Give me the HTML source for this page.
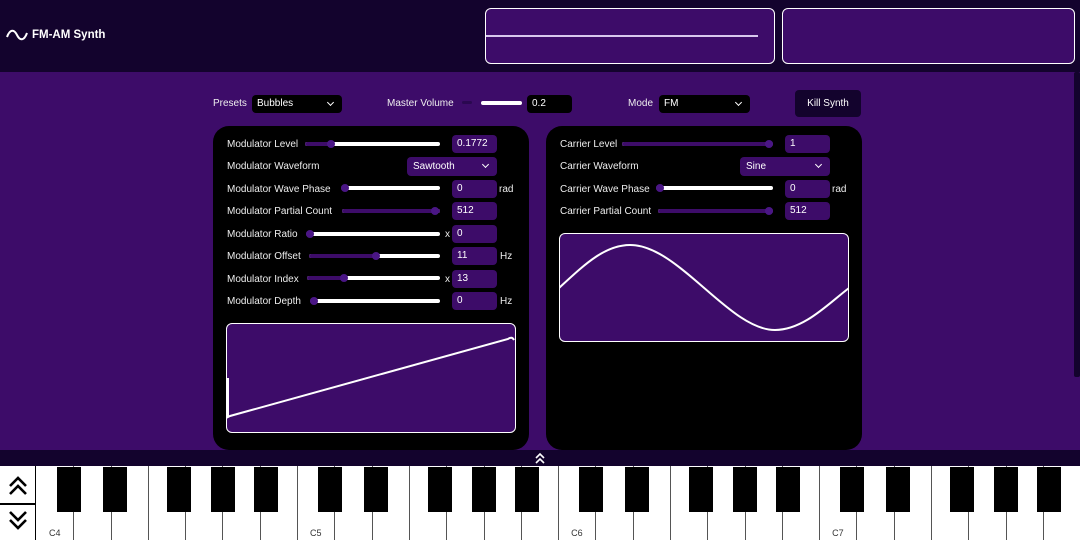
<!DOCTYPE html>
<html><head><meta charset="utf-8"><style>
*{box-sizing:border-box;margin:0;padding:0}
body{width:1080px;height:540px;overflow:hidden;background:#3d0c69;font-family:"Liberation Sans",sans-serif;color:#fff;position:relative}
.a{position:absolute}
.hdr{left:0;top:0;width:1080px;height:72px;background:#13032d}
.t{font-size:10px;color:#eee;white-space:nowrap}
.panel{background:#000;border-radius:16px}
.inp{background:#3d0c69;border-radius:4px;height:18px;font-size:10px;padding:3px 0 0 5px;color:#fff}
.sel{background:#3d0c69;border-radius:4px;height:19px;font-size:10px;padding:4px 0 0 6px}
.sel:after,.bsel:after{content:"";position:absolute;right:9px;top:5px;width:4px;height:4px;border-right:1.5px solid #fff;border-bottom:1.5px solid #fff;transform:rotate(45deg)}
.bsel,.binp{background:#000;border-radius:4px;height:18px;font-size:10px;padding:3px 0 0 5px}
.tr{height:4px;background:#fff;border-radius:2px}
.tr i{position:absolute;left:0;top:0;height:4px;background:#3d0c69;border-radius:2px}
.tr b{position:absolute;top:-2px;width:8px;height:8px;border-radius:50%;background:#4a1685}
.box{border:1.5px solid #fff;border-radius:6px;background:#3d0c69}
.bk{top:467px;width:24px;height:45px;background:#000}
</style></head><body>
<div class="a hdr"></div>
<svg class="a" style="left:6px;top:27px" width="22" height="16" viewBox="0 0 22 16"><path d="M1 10 C4 2,8 2,11 8 C14 14,18 14,21 6" fill="none" stroke="#fff" stroke-width="2"/></svg>
<div class="a" style="left:32px;top:29px;font-size:11.5px;font-weight:bold">FM-AM Synth</div>
<div class="a box" style="left:485px;top:8px;width:290px;height:56px"></div>
<div class="a" style="left:486px;top:35px;width:272px;height:1.5px;background:#d8c8ee"></div>
<div class="a box" style="left:782px;top:8px;width:293px;height:56px"></div>
<div class="a" style="left:1074px;top:72px;width:6px;height:305px;background:#13032d;border-radius:2px"></div>

<div class="a t" style="left:213px;top:98px">Presets</div>
<div class="a bsel" style="left:252px;top:95px;width:90px">Bubbles</div>
<div class="a t" style="left:387px;top:98px">Master Volume</div>
<div class="a" style="left:462px;top:101px;width:10px;height:3px;background:#2a0850;border-radius:2px"></div>
<div class="a" style="left:481px;top:101px;width:41px;height:4px;background:#fff;border-radius:2px"></div>
<div class="a binp" style="left:527px;top:95px;width:45px">0.2</div>
<div class="a t" style="left:628px;top:98px">Mode</div>
<div class="a bsel" style="left:659px;top:95px;width:91px">FM</div>
<div class="a" style="left:795px;top:90px;width:66px;height:27px;background:#13032d;border-radius:4px;font-size:10px;text-align:center;padding-top:8px">Kill Synth</div>

<div class="a panel" style="left:213px;top:126px;width:316px;height:324px"></div>
<div class="a panel" style="left:546px;top:126px;width:316px;height:324px"></div>

<div class="a t" style="left:227px;top:139px">Modulator Level</div>
<div class="a tr" style="left:305px;top:142px;width:135px"><i style="width:26px"></i><b style="left:22px"></b></div>
<div class="a inp" style="left:452px;top:135px;width:45px">0.1772</div>

<div class="a t" style="left:227px;top:161px">Modulator Waveform</div>
<div class="a sel" style="left:407px;top:157px;width:90px">Sawtooth</div>

<div class="a t" style="left:227px;top:184px">Modulator Wave Phase</div>
<div class="a tr" style="left:341px;top:186px;width:99px"><i style="width:4px"></i><b style="left:0"></b></div>
<div class="a inp" style="left:452px;top:180px;width:45px">0</div>
<div class="a t" style="left:499px;top:184px">rad</div>

<div class="a t" style="left:227px;top:206px">Modulator Partial Count</div>
<div class="a tr" style="left:342px;top:209px;width:98px"><i style="width:98px"></i><b style="left:89px"></b></div>
<div class="a inp" style="left:452px;top:202px;width:45px">512</div>

<div class="a t" style="left:227px;top:229px">Modulator Ratio</div>
<div class="a tr" style="left:306px;top:232px;width:134px"><i style="width:4px"></i><b style="left:0"></b></div>
<div class="a t" style="left:445px;top:229px">x</div>
<div class="a inp" style="left:452px;top:225px;width:45px">0</div>

<div class="a t" style="left:227px;top:251px">Modulator Offset</div>
<div class="a tr" style="left:309px;top:254px;width:131px"><i style="width:68px"></i><b style="left:63px"></b></div>
<div class="a inp" style="left:452px;top:247px;width:45px">11</div>
<div class="a t" style="left:500px;top:251px">Hz</div>

<div class="a t" style="left:227px;top:274px">Modulator Index</div>
<div class="a tr" style="left:307px;top:276px;width:133px"><i style="width:38px"></i><b style="left:33px"></b></div>
<div class="a t" style="left:445px;top:274px">x</div>
<div class="a inp" style="left:452px;top:270px;width:45px">13</div>

<div class="a t" style="left:227px;top:296px">Modulator Depth</div>
<div class="a tr" style="left:310px;top:299px;width:130px"><i style="width:4px"></i><b style="left:0"></b></div>
<div class="a inp" style="left:452px;top:292px;width:45px">0</div>
<div class="a t" style="left:500px;top:296px">Hz</div>

<div class="a box" style="left:226px;top:323px;width:290px;height:110px"></div>
<svg class="a" style="left:226px;top:323px" width="290" height="110"><path d="M2 55 L2 94 L4 93 L282 16 Q286 13 288 17" fill="none" stroke="#fff" stroke-width="2"/></svg>

<div class="a t" style="left:560px;top:139px">Carrier Level</div>
<div class="a tr" style="left:622px;top:142px;width:151px"><i style="width:151px"></i><b style="left:143px"></b></div>
<div class="a inp" style="left:785px;top:135px;width:45px">1</div>

<div class="a t" style="left:560px;top:161px">Carrier Waveform</div>
<div class="a sel" style="left:740px;top:157px;width:90px">Sine</div>

<div class="a t" style="left:560px;top:184px">Carrier Wave Phase</div>
<div class="a tr" style="left:656px;top:186px;width:117px"><i style="width:4px"></i><b style="left:0"></b></div>
<div class="a inp" style="left:785px;top:180px;width:45px">0</div>
<div class="a t" style="left:832px;top:184px">rad</div>

<div class="a t" style="left:560px;top:206px">Carrier Partial Count</div>
<div class="a tr" style="left:658px;top:209px;width:115px"><i style="width:115px"></i><b style="left:107px"></b></div>
<div class="a inp" style="left:785px;top:202px;width:45px">512</div>

<div class="a box" style="left:559px;top:233px;width:290px;height:109px"></div>
<svg class="a" style="left:559px;top:233px" width="290" height="109"><path d="M0 55 C24 33,45 12,71 12 C120 12,170 97,216 97 C245 97,270 70,290 55" fill="none" stroke="#fff" stroke-width="2"/></svg>

<div class="a" style="left:0;top:450px;width:1080px;height:17px;background:#13032d"></div>
<svg class="a" style="left:534px;top:452px" width="12" height="12" viewBox="0 0 12 12"><path d="M2 6 L6 2 L10 6 M2 11 L6 7 L10 11" fill="none" stroke="#fff" stroke-width="1.6"/></svg>

<div class="a" style="left:0;top:466px;width:1080px;height:74px;background:#fff"></div>
<div class="a" style="left:0;top:503px;width:35px;height:2px;background:#000"></div>
<div class="a" style="left:35px;top:466px;width:1px;height:74px;background:#000"></div>
<svg class="a" style="left:7px;top:475px" width="22" height="22" viewBox="0 0 22 22"><path d="M3 11 L11 3 L19 11 M3 19 L11 11 L19 19" fill="none" stroke="#000" stroke-width="2.6"/></svg>
<svg class="a" style="left:7px;top:509px" width="22" height="22" viewBox="0 0 22 22"><path d="M3 3 L11 11 L19 3 M3 11 L11 19 L19 11" fill="none" stroke="#000" stroke-width="2.6"/></svg>
<div id="kb"></div>
<script>
var h='',x0=36,w=37.29;
for(var i=1;i<28;i++){var x=x0+i*w;h+='<div class="a" style="left:'+x.toFixed(1)+'px;top:466px;width:1px;height:74px;background:#555"></div>';}
var off=[21,67,131,175,218];
for(var o=0;o<4;o++){var base=x0+o*7*w;for(var j=0;j<5;j++){h+='<div class="a bk" style="left:'+(base+off[j]).toFixed(1)+'px"></div>';}
h+='<div class="a" style="left:'+(base+13).toFixed(1)+'px;top:528px;font-size:9px;color:#333">C'+(4+o)+'</div>';}
document.getElementById('kb').innerHTML=h;
</script>
</body></html>
